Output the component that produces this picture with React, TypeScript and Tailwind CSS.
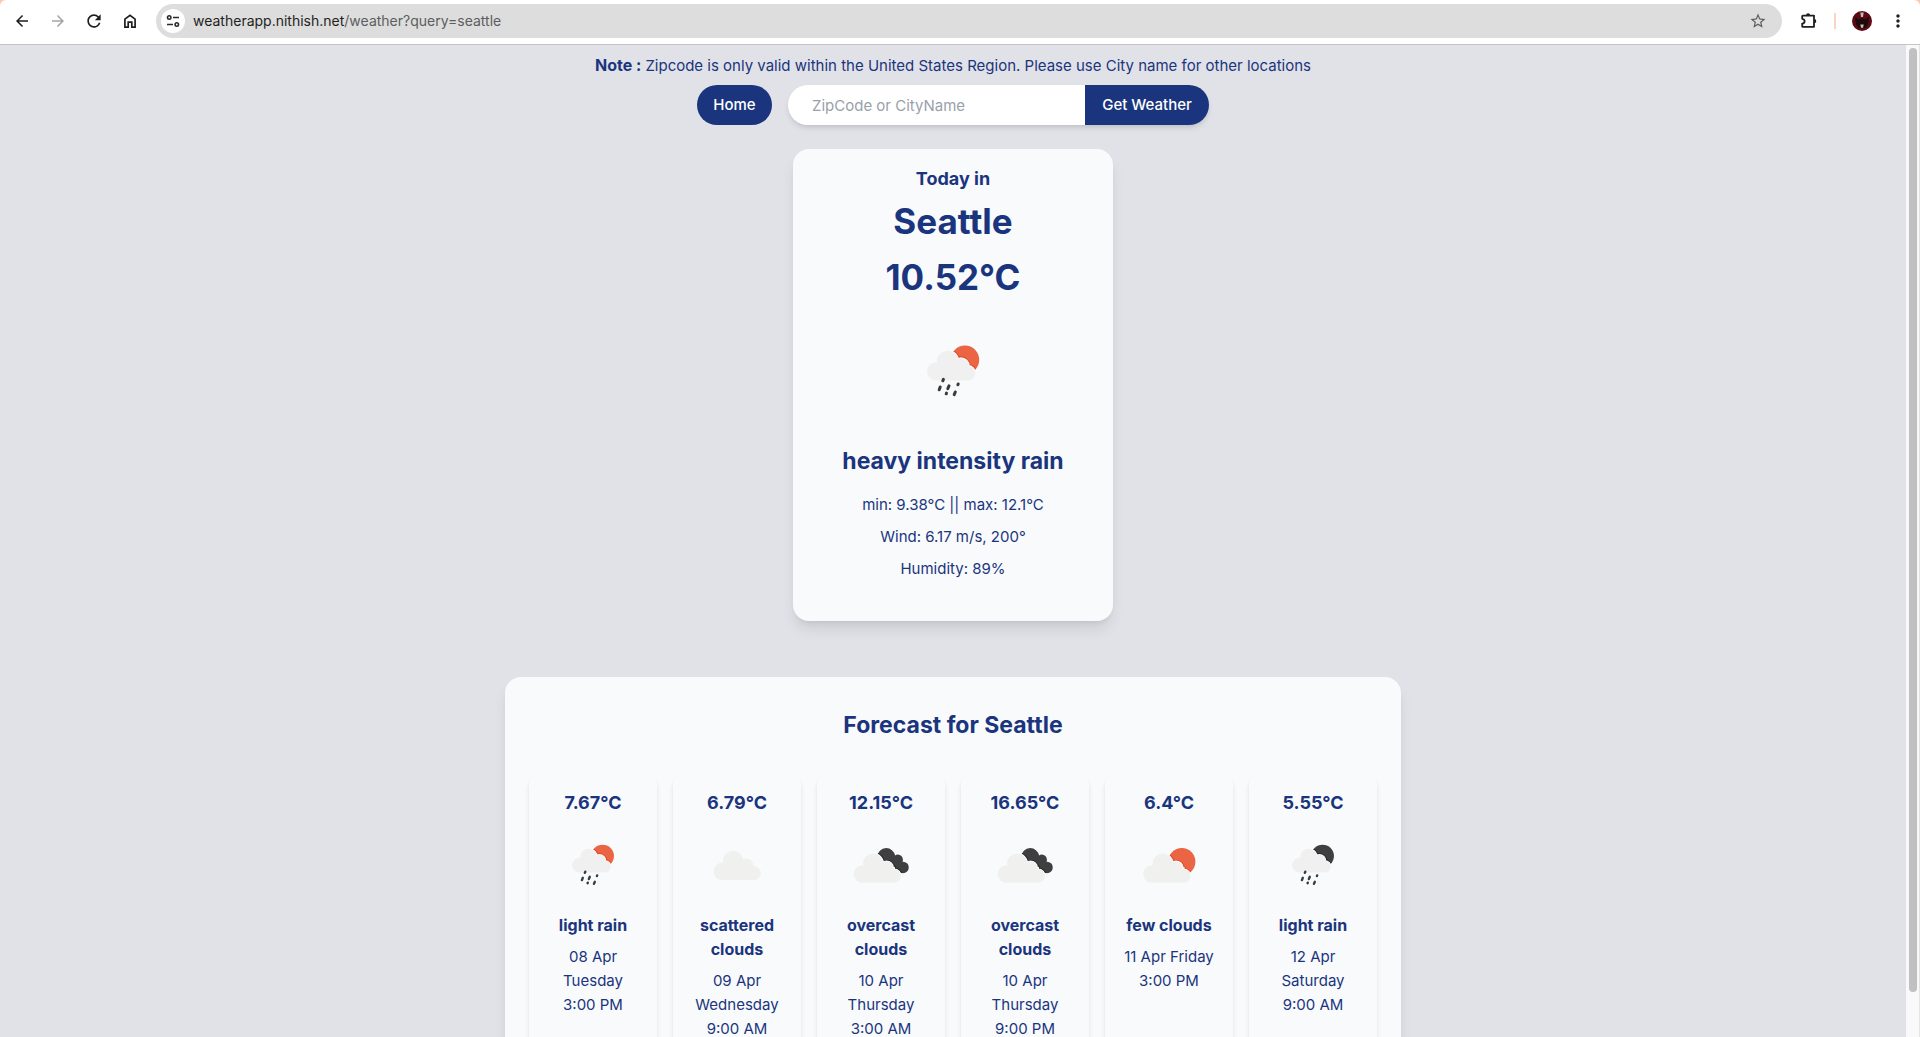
import { MdArrowBack, MdArrowForward, MdMoreVert, MdRefresh, MdStarBorder } from "react-icons/md";

type IconKind = "rain-day" | "rain-night" | "scattered" | "overcast" | "few";

const RED = "#eb6444";
const RED_EDGE = "#e2441f";
const DARK = "#3f3f41";
const DARK_EDGE = "#222224";

function SmallCloud({ fill }: { fill: string }) {
  return (
    <g fill={fill}>
      <circle cx="33" cy="50.3" r="9" />
      <circle cx="44.5" cy="40.3" r="10.6" />
      <circle cx="58" cy="45" r="7.7" />
      <circle cx="65" cy="52.2" r="7.2" />
      <rect x="33" y="44" width="32" height="15.4" />
    </g>
  );
}

function BigCloud({ fill }: { fill: string }) {
  return (
    <g fill={fill}>
      <circle cx="32.2" cy="57.9" r="10.9" />
      <circle cx="45.6" cy="45" r="12.7" />
      <circle cx="62.4" cy="50.3" r="8.3" />
      <circle cx="72" cy="60.4" r="8.4" />
      <rect x="32" y="50" width="40" height="18.8" />
    </g>
  );
}

function WeatherIcon({ kind, id, className }: { kind: IconKind; id: string; className: string }) {
  const rain = kind === "rain-day" || kind === "rain-night";
  const clip = `url(#${id})`;
  const edge = kind === "rain-day" || kind === "few" ? RED_EDGE : DARK_EDGE;
  const body = kind === "rain-day" || kind === "few" ? RED : DARK;
  return (
    <svg viewBox="0 0 100 100" className={className} aria-hidden="true">
      <defs>
        <clipPath id={id}>
          {rain && <circle cx="62" cy="38.8" r="14.2" />}
          {kind === "few" && <circle cx="66" cy="45.8" r="17" />}
          {kind === "overcast" && (
            <>
              <circle cx="56.5" cy="40" r="11.2" />
              <circle cx="71" cy="43.4" r="6.4" />
              <circle cx="77.5" cy="53" r="7.2" />
              <path d="M61.5 38L71.5 44L77.5 60H59.5L51.5 44Z" />
            </>
          )}
        </clipPath>
      </defs>
      {kind !== "scattered" && <rect width="100" height="100" fill={body} clipPath={clip} />}
      {rain && (
        <>
          <g clipPath={clip}>
            <g stroke={edge} strokeWidth="4">
              <SmallCloud fill={edge} />
            </g>
          </g>
          <g stroke="#f8fafc" strokeWidth="2">
            <SmallCloud fill="#f8fafc" />
          </g>
          <SmallCloud fill="#f0f0f0" />
          <path
            d="M40.4 58.4L39.8 59.8M37.2 66L36.2 68.8M46 64.8L44.8 67.6M55.2 63L54.9 63.8M43.5 72.1L43.2 72.8M52.3 71L51.2 73.6"
            stroke="#3a3a3c"
            strokeWidth="3"
            strokeLinecap="round"
          />
        </>
      )}
      {kind === "scattered" && (
        <g transform="translate(-0.6 0)">
          <BigCloud fill="#f0f0ee" />
        </g>
      )}
      {(kind === "overcast" || kind === "few") && (
        <>
          <g clipPath={clip}>
            <g transform={kind === "few" ? "translate(-3.6 3.3)" : "translate(-5.5 3.3)"} stroke={edge} strokeWidth="4">
              <BigCloud fill={edge} />
            </g>
          </g>
          <g transform={kind === "few" ? "translate(-3.6 3.3)" : "translate(-5.5 3.3)"}>
            <g stroke="#f8fafc" strokeWidth="2">
              <BigCloud fill="#f8fafc" />
            </g>
            <BigCloud fill="#f0f0ee" />
          </g>
        </>
      )}
    </svg>
  );
}

const forecast: { temp: string; kind: IconKind; text: string; date: string; time: string }[] = [
  { temp: "7.67°C", kind: "rain-day", text: "light rain", date: "08 Apr Tuesday", time: "3:00 PM" },
  { temp: "6.79°C", kind: "scattered", text: "scattered clouds", date: "09 Apr Wednesday", time: "9:00 AM" },
  { temp: "12.15°C", kind: "overcast", text: "overcast clouds", date: "10 Apr Thursday", time: "3:00 AM" },
  { temp: "16.65°C", kind: "overcast", text: "overcast clouds", date: "10 Apr Thursday", time: "9:00 PM" },
  { temp: "6.4°C", kind: "few", text: "few clouds", date: "11 Apr Friday", time: "3:00 PM" },
  { temp: "5.55°C", kind: "rain-night", text: "light rain", date: "12 Apr Saturday", time: "9:00 AM" },
];

function Toolbar() {
  return (
    <div className="shrink-0 bg-[#fbc9b3]">
      <header className="flex h-[45px] items-start rounded-t-md border-b border-[#c4c4c4] bg-white pt-1 pr-3 pl-3">
        <nav className="flex h-[34px] items-center gap-4 text-[#1f1f1f]" aria-label="Browser">
          <button aria-label="Back"><MdArrowBack className="mx-px size-[18px]" /></button>
          <button aria-label="Forward" className="text-[#a5a5a5]"><MdArrowForward className="mx-px size-[18px]" /></button>
          <button aria-label="Reload"><MdRefresh className="size-5" /></button>
          <button aria-label="Home page">
            <svg viewBox="0 0 20 20" className="size-5" fill="none" stroke="currentColor" strokeWidth="1.7">
              <path d="M4.9 16.2V8.1L10 4.2L15.1 8.1V16.2H11.8V11.2H8.2V16.2Z" />
            </svg>
          </button>
        </nav>
        <div className="ml-4 flex h-[34px] flex-1 items-center rounded-full bg-[#dddddd] pr-[15px] pl-[5px]">
          <button aria-label="Site information" className="flex size-6 items-center justify-center rounded-full bg-white">
            <svg viewBox="0 0 14 14" className="size-[14px]" fill="none" stroke="#2b2b2b" strokeWidth="1.6">
              <circle cx="3.2" cy="3.5" r="1.7" />
              <path d="M7 3.5H13M1 10.5H7" />
              <circle cx="10.8" cy="10.5" r="1.7" />
            </svg>
          </button>
          <p className="ml-2 flex-1 text-sm text-[#5c5d60]">
            <span className="text-[#1f1f1f]">weatherapp.nithish.net</span>/weather?query=seattle
          </p>
          <button aria-label="Bookmark" className="text-[#5c5d60]"><MdStarBorder className="size-[18px]" /></button>
        </div>
        <div className="ml-4 flex h-[34px] items-center text-[#1f1f1f]">
          <button aria-label="Extensions">
            <svg viewBox="0 0 20 20" className="size-5">
              <path
                d="M4.8 4.6H16V15.8H4.8Q4.2 15.8 4.2 15.2V12.6Q6.6 12.2 6.6 10.2T4.2 7.8V5.2Q4.2 4.6 4.8 4.6Z"
                fill="none"
                stroke="currentColor"
                strokeWidth="1.8"
                strokeLinejoin="round"
              />
              <path d="M8 4.4a2.1 2.1 0 0 1 4.2 0zM16.2 8.1a2.1 2.1 0 0 1 0 4.2z" fill="currentColor" />
            </svg>
          </button>
          <span className="ml-4 h-4 w-0.5 bg-[#fbd3c0]" />
          <button aria-label="Profile" className="ml-4">
            <svg viewBox="0 0 20 20" className="size-5">
              <circle cx="10" cy="10" r="10" fill="#5a0a12" />
              <path d="M3 6l4 2.5 3-1.5 3 1.5 4-2.5-1 7-2.5 4h-7L4 13z" fill="#1c0a0d" />
              <path d="M8.3 1.5h3.4l-.7 4.5H9zM8.3 13.5h3.4l-.6 3.2H9z" fill="#c9bab6" />
            </svg>
          </button>
          <button aria-label="Menu" className="ml-4"><MdMoreVert className="size-5" /></button>
        </div>
      </header>
    </div>
  );
}

export default function App() {
  return (
    <div className="flex h-screen flex-col overflow-hidden bg-[#e1e2e8] font-['Inter',sans-serif] text-[15px] leading-6 text-[#1a357d]">
      <Toolbar />
      <div className="flex min-h-0 flex-1">
        <main className="flex min-w-0 flex-1 flex-col items-center overflow-hidden pt-2">
          <p className="flex items-baseline gap-1">
            <b className="text-base leading-6 font-bold">Note :</b>
            <span>Zipcode is only valid within the United States Region. Please use City name for other locations</span>
          </p>
          <form className="mt-[7px] flex shrink-0 gap-4" onSubmit={(e) => e.preventDefault()}>
            <button type="button" className="h-10 w-[75px] rounded-full bg-[#1a357d] font-medium text-white">Home</button>
            <div className="flex rounded-full shadow-md">
              <input aria-label="ZipCode or CityName" placeholder="ZipCode or CityName" className="h-10 w-[297px] rounded-l-full bg-white px-6 placeholder-[#9a9fab] outline-none" />
              <button type="submit" className="h-10 w-31 rounded-r-full bg-[#1a357d] font-medium text-white">Get Weather</button>
            </div>
          </form>
          <section className="mt-6 flex w-80 shrink-0 flex-col items-center rounded-2xl bg-slate-50 pt-4 pb-10 shadow-lg">
            <h2 className="text-lg font-bold">Today in</h2>
            <h1 className="mt-2 text-[35px] leading-10 font-bold">Seattle</h1>
            <p className="mt-4 text-[35px] leading-10 font-bold">10.52°C</p>
            <WeatherIcon id="today" kind="rain-day" className="mt-6 size-[100px]" />
            <p className="mt-6 text-[23px] leading-8 font-bold">heavy intensity rain</p>
            <p className="mt-4">min: 9.38°C || max: 12.1°C</p>
            <p className="mt-2">Wind: 6.17 m/s, 200°</p>
            <p className="mt-2">Humidity: 89%</p>
          </section>
          <section className="mt-14 w-full max-w-4xl shrink-0 rounded-2xl bg-slate-50 p-6 pt-8 shadow-lg">
            <h2 className="text-center text-[23px] leading-8 font-bold">Forecast for Seattle</h2>
            <ul className="mt-8 grid grid-cols-6 gap-4">
              {forecast.map((f, i) => (
                <li key={i} className="flex flex-col items-center rounded-xl px-4 pt-4 pb-8 text-center shadow-md">
                  <h3 className="text-lg font-bold">{f.temp}</h3>
                  <WeatherIcon id={`forecast-${i}`} kind={f.kind} className="mt-2 size-20" />
                  <p className="mt-2 text-base font-bold">{f.text}</p>
                  <p className="mt-2">{f.date}</p>
                  <p>{f.time}</p>
                </li>
              ))}
            </ul>
          </section>
        </main>
        <div className="w-[14px] shrink-0 border-r border-[#e4e4e4] bg-[#f9f9f9] pt-[3px] pl-[3px]">
          <div className="h-[95.5%] w-2 rounded-full bg-[#c0c0c0]" />
        </div>
      </div>
    </div>
  );
}
